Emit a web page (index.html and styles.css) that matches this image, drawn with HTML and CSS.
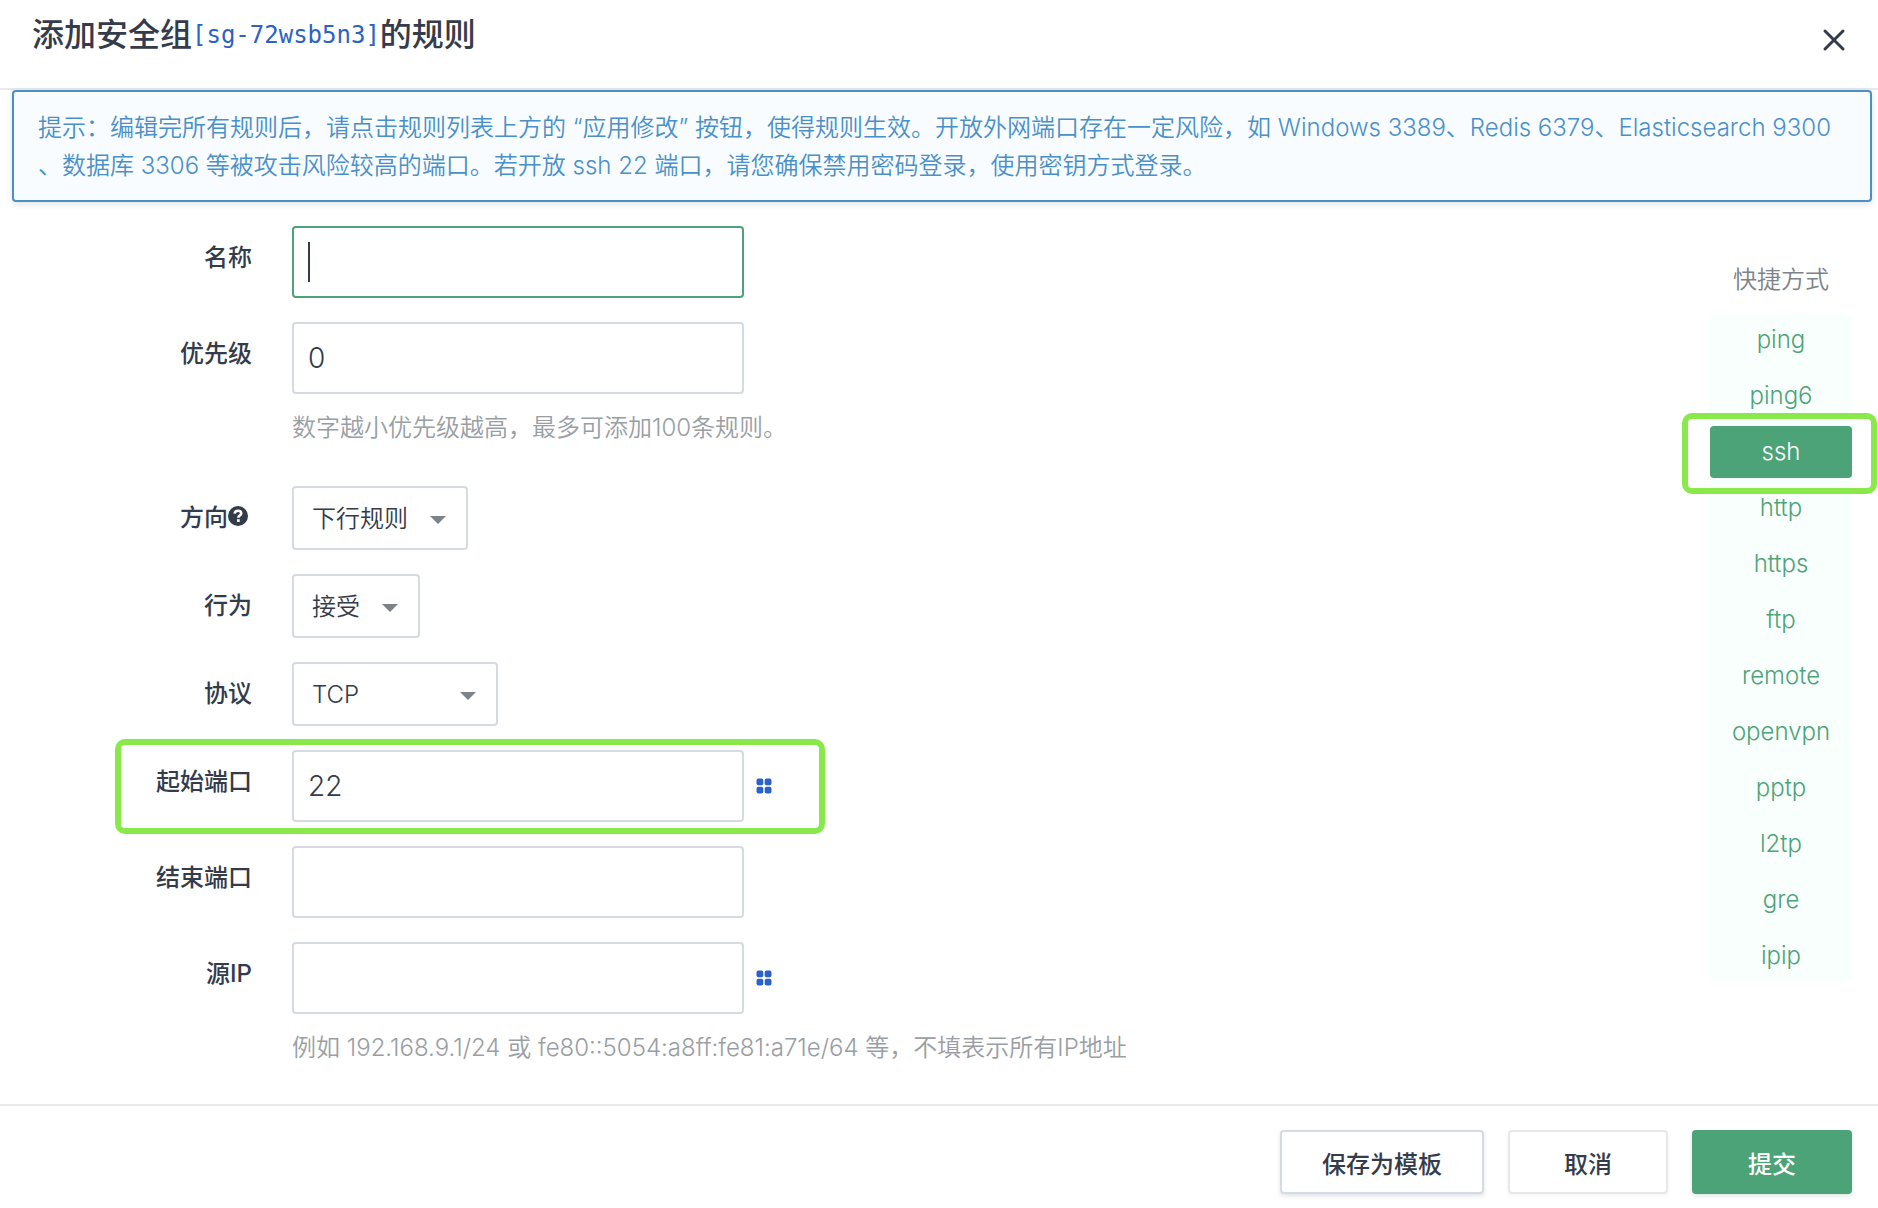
FILE: index.html
```html
<!DOCTYPE html>
<html lang="zh-CN">

<head>
    <meta charset="UTF-8">
    <meta name="viewport" content="width=device-width, initial-scale=1.0">
    <title>添加安全组规则</title>
    <link rel="stylesheet" href="styles.css">
</head>

<body>
    <div class="modal">
        <header class="modal-header">
            <h1>添加安全组<a href="#" class="sg-id">[sg-72wsb5n3]</a>的规则</h1>
            <button type="button" class="close" aria-label="关闭">
                <svg width="24" height="24" viewBox="0 0 24 24">
                    <path d="M3 3L21 21M21 3L3 21" fill="none" stroke="currentColor" stroke-width="3" stroke-linecap="round" />
                </svg>
            </button>
        </header>

        <p class="alert">提示：编辑完所有规则后，请点击规则列表上方的 “应用修改” 按钮，使得规则生效。开放外网端口存在一定风险，如 Windows 3389、Redis 6379、Elasticsearch 9300<br>、数据库 3306 等被攻击风险较高的端口。若开放 ssh 22 端口，请您确保禁用密码登录，使用密钥方式登录。</p>

        <form id="ruleForm" action="#" method="post">
            <div class="modal-body">
                <div class="fields">
                    <div class="form-group">
                        <label for="name">名称</label>
                        <input type="text" id="name" name="name" autofocus>
                    </div>
                    <div class="form-group">
                        <label for="priority">优先级</label>
                        <input type="text" id="priority" name="priority" value="0">
                        <p class="help">数字越小优先级越高，最多可添加100条规则。</p>
                    </div>
                    <div class="form-group">
                        <label for="direction">方向<svg class="icon-help" width="20" height="20" viewBox="0 0 20 20">
                                <circle cx="10" cy="10" r="10" fill="currentColor" />
                                <path d="M6.6 7.6C6.9 5.6 8.2 4.7 10 4.7C11.9 4.7 13.2 5.8 13.2 7.4C13.2 9.6 10.3 9.5 10.3 11.8" fill="none" stroke="#fff" stroke-width="2.6" />
                                <rect x="9" y="13.2" width="2.7" height="2.7" fill="#fff" />
                            </svg></label>
                        <div class="select">
                            <select id="direction" name="direction">
                                <option>下行规则</option>
                            </select>
                        </div>
                    </div>
                    <div class="form-group">
                        <label for="action">行为</label>
                        <div class="select">
                            <select id="action" name="action">
                                <option>接受</option>
                            </select>
                        </div>
                    </div>
                    <div class="form-group">
                        <label for="protocol">协议</label>
                        <div class="select select-wide">
                            <select id="protocol" name="protocol">
                                <option>TCP</option>
                            </select>
                        </div>
                    </div>
                    <div class="form-group marked">
                        <label for="startPort">起始端口</label>
                        <input type="text" id="startPort" name="startPort" value="22">
                        <button type="button" class="picker" aria-label="选择端口">
                            <svg width="16" height="16" viewBox="0 0 16 16" fill="currentColor">
                                <rect x="0.5" y="0.5" width="6.8" height="6.8" rx="2" />
                                <rect x="8.7" y="0.5" width="6.8" height="6.8" rx="2" />
                                <rect x="0.5" y="8.7" width="6.8" height="6.8" rx="2" />
                                <rect x="8.7" y="8.7" width="6.8" height="6.8" rx="2" />
                            </svg>
                        </button>
                    </div>
                    <div class="form-group">
                        <label for="endPort">结束端口</label>
                        <input type="text" id="endPort" name="endPort">
                    </div>
                    <div class="form-group">
                        <label for="sourceIp">源IP</label>
                        <input type="text" id="sourceIp" name="sourceIp">
                        <button type="button" class="picker" aria-label="选择IP">
                            <svg width="16" height="16" viewBox="0 0 16 16" fill="currentColor">
                                <rect x="0.5" y="0.5" width="6.8" height="6.8" rx="2" />
                                <rect x="8.7" y="0.5" width="6.8" height="6.8" rx="2" />
                                <rect x="0.5" y="8.7" width="6.8" height="6.8" rx="2" />
                                <rect x="8.7" y="8.7" width="6.8" height="6.8" rx="2" />
                            </svg>
                        </button>
                        <p class="help">例如 192.168.9.1/24 或 fe80::5054:a8ff:fe81:a71e/64 等，不填表示所有IP地址</p>
                    </div>
                </div>

                <aside class="shortcuts">
                    <h2>快捷方式</h2>
                    <ul>
                        <li><a href="#">ping</a></li>
                        <li><a href="#">ping6</a></li>
                        <li class="marked"><a href="#" class="active">ssh</a></li>
                        <li><a href="#">http</a></li>
                        <li><a href="#">https</a></li>
                        <li><a href="#">ftp</a></li>
                        <li><a href="#">remote</a></li>
                        <li><a href="#">openvpn</a></li>
                        <li><a href="#">pptp</a></li>
                        <li><a href="#">l2tp</a></li>
                        <li><a href="#">gre</a></li>
                        <li><a href="#">ipip</a></li>
                    </ul>
                </aside>
            </div>

            <footer class="modal-footer">
                <button type="button" class="btn">保存为模板</button>
                <button type="button" class="btn btn-cancel">取消</button>
                <button type="submit" class="btn btn-primary">提交</button>
            </footer>
        </form>
    </div>

    <script>
        document.getElementById('name').focus();
    </script>
</body>

</html>
```
FILE: styles.css
```css
* {
    box-sizing: border-box;
}

body {
    margin: 0;
    background: #fff;
    color: #343b4a;
    font-family: Inter, "Noto Sans CJK SC", sans-serif;
    font-size: 24px;
    font-weight: 350;
    line-height: 36px;
}

a {
    text-decoration: none;
}

/* 标题栏 */
.modal-header {
    display: flex;
    justify-content: space-between;
    align-items: flex-start;
    height: 90px;
    padding: 12px 32px;
    border-bottom: 2px solid #e8eaec;
}

.modal-header h1 {
    display: flex;
    margin: 0;
    font-size: 32px;
    line-height: 46px;
    font-weight: 500;
}

.sg-id {
    color: #2b62c4;
    font-family: "DejaVu Sans Mono", monospace;
    font-size: 24px;
    font-weight: 400;
}

.close {
    display: flex;
    margin-top: 16px;
    padding: 0;
    border: none;
    background: none;
    color: #343b4a;
    cursor: pointer;
}

/* 提示 */
.alert {
    margin: 0 6px 24px 12px;
    padding: 17px 8px 15px 24px;
    border: 2px solid #4a90c8;
    border-radius: 4px;
    background: #f8fcff;
    box-shadow: 0 2px 6px rgba(50, 60, 90, 0.15);
    color: #4a90c8;
    line-height: 38px;
}

/* 表单 */
.modal-body {
    display: flex;
    justify-content: space-between;
    padding: 0 26px 22px 32px;
}

.fields {
    display: flex;
    flex-direction: column;
    align-items: flex-start;
    gap: 24px;
}

.form-group {
    display: grid;
    grid-template-columns: 248px 452px auto;
    column-gap: 12px;
    position: relative;
}

.form-group label {
    padding-right: 28px;
    font-weight: 500;
    line-height: 64px;
    text-align: right;
}

.form-group input {
    height: 72px;
    padding: 0 14px;
}

.form-group input,
.form-group select {
    border: 2px solid #d5dbe3;
    border-radius: 4px;
    outline: none;
    background: #fff;
    color: #343b4a;
    font-family: inherit;
    font-size: 28px;
    font-weight: 350;
}

/* 聚焦时显示加高的光标 */
.form-group input:focus {
    border-color: #4ca377;
    background: linear-gradient(#343b4a, #343b4a) 14px center / 2px 40px no-repeat #fff;
    caret-color: transparent;
}

.select {
    display: grid;
    justify-self: start;
    align-items: center;
}

.select select {
    grid-area: 1 / 1;
    height: 64px;
    padding: 0 58px 0 18px;
    appearance: none;
    font-size: 24px;
}

/* 下拉箭头 */
.select::after {
    content: "";
    grid-area: 1 / 1;
    justify-self: end;
    margin: 4px 22px 0 0;
    border: 8px solid transparent;
    border-top-color: #7c838a;
    border-bottom: none;
    pointer-events: none;
}

.select-wide {
    width: 206px;
}

.help {
    grid-column: 2 / -1;
    margin: 16px 0;
    color: #999ea4;
}

.icon-help {
    margin-right: 4px;
}

.picker {
    align-self: center;
    display: flex;
    padding: 0;
    border: none;
    background: none;
    color: #2b62c9;
    cursor: pointer;
}

/* 绿色标记框 */
.marked::after {
    content: "";
    position: absolute;
    border: 6px solid #89e94a;
    border-radius: 10px;
    pointer-events: none;
}

.form-group.marked::after {
    inset: -11px -53px -12px 83px;
}

/* 快捷方式 */
.shortcuts {
    width: 142px;
    padding-top: 36px;
    text-align: center;
}

.shortcuts h2 {
    margin: 0 0 16px;
    color: #7c838a;
    font-size: 24px;
    font-weight: 350;
}

.shortcuts ul {
    display: grid;
    gap: 4px;
    margin: 0;
    padding: 0;
    background: #f8fffd;
    list-style: none;
}

.shortcuts li {
    position: relative;
}

.shortcuts a {
    display: block;
    border-radius: 4px;
    color: #4ca377;
    line-height: 52px;
}

.shortcuts .active {
    background: #4ca377;
    color: #fff;
}

.shortcuts .marked::after {
    inset: -13px -25px -16px -28px;
}

/* 底部按钮 */
.modal-footer {
    display: flex;
    justify-content: flex-end;
    gap: 24px;
    padding: 24px 26px 14px;
    border-top: 2px solid #e8eaec;
}

.btn {
    height: 64px;
    min-width: 160px;
    padding: 0 40px;
    border: 2px solid #d5dbe3;
    border-radius: 4px;
    background: #fff;
    box-shadow: 0 2px 4px rgba(50, 60, 90, 0.14);
    color: #343b4a;
    font-family: inherit;
    font-size: 24px;
    font-weight: 500;
    cursor: pointer;
}

.btn-cancel {
    border-color: #e6e8ec;
    box-shadow: 0 2px 4px rgba(50, 60, 90, 0.06);
}

.btn-primary {
    border-color: #4ca377;
    background: #4ca377;
    color: #fff;
}
```
